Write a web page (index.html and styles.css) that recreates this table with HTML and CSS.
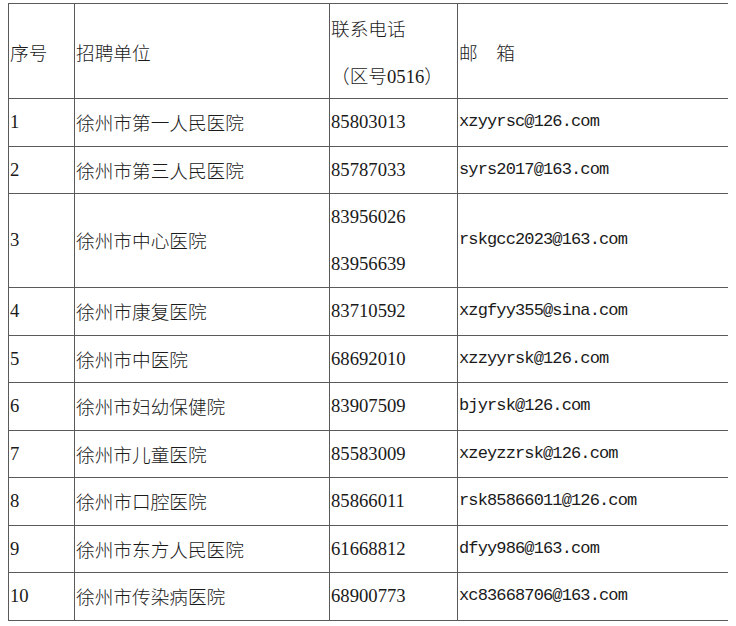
FILE: index.html
```html
<!DOCTYPE html>
<html lang="zh-CN">
<head>
<meta charset="utf-8">
<title>招聘单位联系方式</title>
<link rel="stylesheet" href="styles.css">
</head>
<body>
<table class="list">
  <colgroup>
    <col class="c-no">
    <col class="c-unit">
    <col class="c-tel">
    <col class="c-mail">
  </colgroup>
  <thead>
    <tr class="head">
      <th>序号</th>
      <th>招聘单位</th>
      <th><div>联系电话</div><div>（区号<span class="num inl">0516</span>）</div></th>
      <th>邮<span class="gap"></span>箱</th>
    </tr>
  </thead>
  <tbody>
    <tr><td class="num">1</td><td>徐州市第一人民医院</td><td class="num">85803013</td><td class="mail">xzyyrsc@126.com</td></tr>
    <tr><td class="num">2</td><td>徐州市第三人民医院</td><td class="num">85787033</td><td class="mail">syrs2017@163.com</td></tr>
    <tr><td class="num">3</td><td>徐州市中心医院</td><td class="num"><div>83956026</div><div>83956639</div></td><td class="mail">rskgcc2023@163.com</td></tr>
    <tr><td class="num">4</td><td>徐州市康复医院</td><td class="num">83710592</td><td class="mail">xzgfyy355@sina.com</td></tr>
    <tr><td class="num">5</td><td>徐州市中医院</td><td class="num">68692010</td><td class="mail">xzzyyrsk@126.com</td></tr>
    <tr><td class="num">6</td><td>徐州市妇幼保健院</td><td class="num">83907509</td><td class="mail">bjyrsk@126.com</td></tr>
    <tr><td class="num">7</td><td>徐州市儿童医院</td><td class="num">85583009</td><td class="mail">xzeyzzrsk@126.com</td></tr>
    <tr><td class="num">8</td><td>徐州市口腔医院</td><td class="num">85866011</td><td class="mail">rsk85866011@126.com</td></tr>
    <tr><td class="num">9</td><td>徐州市东方人民医院</td><td class="num">61668812</td><td class="mail">dfyy986@163.com</td></tr>
    <tr><td class="num">10</td><td>徐州市传染病医院</td><td class="num">68900773</td><td class="mail">xc83668706@163.com</td></tr>
  </tbody>
</table>
</body>
</html>
```
FILE: styles.css
```css
html, body {
  background: #ffffff;
}
body {
  margin: 3px 8px;
  font-family: "Noto Sans CJK SC", "Liberation Serif", sans-serif;
  font-size: 18.67px;
  font-weight: 300;
  color: #1a1a1a;
}
.list {
  border-collapse: collapse;
  table-layout: fixed;
  width: 722px;
}
.c-no { width: 66px; }
.c-unit { width: 255px; }
.c-tel { width: 128px; }
.c-mail { width: 273px; }
.list th,
.list td {
  border: 1px solid #5a5a5a;
  padding: 0 0 0 1px;
  text-align: left;
  vertical-align: middle;
  font-weight: 300;
  line-height: 46.5px;
  white-space: nowrap;
  overflow: hidden;
}
.list .head th {
  line-height: 47px;
}
.num {
  font-family: "Liberation Serif", "Noto Sans CJK SC", serif;
  font-weight: normal;
}
.inl {
  display: inline-block;
  line-height: 1;
}
.mail {
  font-family: "Liberation Mono", monospace;
  font-size: 17px;
  letter-spacing: -0.87px;
  font-weight: normal;
}
.gap {
  display: inline-block;
  width: 18.67px;
}
```
